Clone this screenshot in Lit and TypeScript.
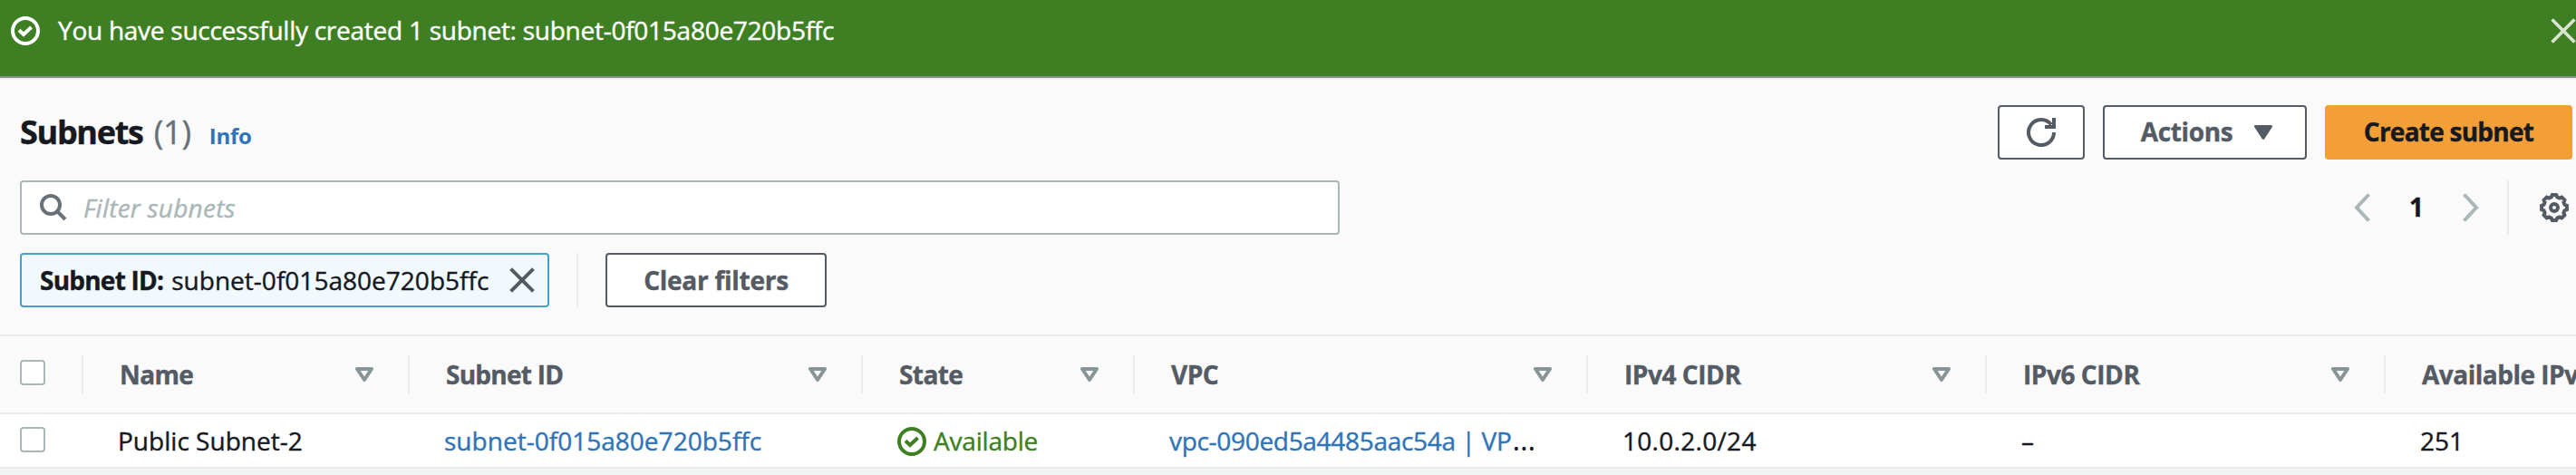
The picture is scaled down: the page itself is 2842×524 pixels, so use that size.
import { LitElement, html, css, svg } from 'lit';
import { customElement } from 'lit/decorators.js';

interface Column { label: string; cls: string; sortable: boolean; }

const columns: Column[] = [
  { label: 'Name', cls: 'c-name', sortable: true },
  { label: 'Subnet ID', cls: 'c-id', sortable: true },
  { label: 'State', cls: 'c-state', sortable: true },
  { label: 'VPC', cls: 'c-vpc', sortable: true },
  { label: 'IPv4 CIDR', cls: 'c-v4', sortable: true },
  { label: 'IPv6 CIDR', cls: 'c-v6', sortable: true },
  { label: 'Available IPv4 addresses', cls: 'c-avail', sortable: false },
];

// Closed outline of an eight-toothed cog around (16, 16).
const gearPath = (() => {
  const pt = (deg: number, r: number) => {
    const a = (deg * Math.PI) / 180;
    return `${(16 + r * Math.cos(a)).toFixed(2)} ${(16 + r * Math.sin(a)).toFixed(2)}`;
  };
  const pts: string[] = [];
  for (let k = 0; k < 8; k++) {
    const a = k * 45;
    pts.push(pt(a - 9, 14.1), pt(a + 9, 14.1), pt(a + 16, 11.9), pt(a + 29, 11.9));
  }
  return `M${pts.join('L')}Z`;
})();

const statusIcon = html`<svg class="icon" width="32" height="32" viewBox="0 0 32 32">
  <circle cx="16" cy="16" r="14" /><path d="M9 15.2L14 20L22.6 12" /></svg>`;
const closeIcon = html`<svg class="icon" width="28" height="28" viewBox="0 0 28 28">
  <path d="M1.6 1.6L26.4 26.4M26.4 1.6L1.6 26.4" /></svg>`;
const sortIcon = html`<svg class="icon sort" width="20" height="16" viewBox="0 0 20 16">
  <path d="M2 2H18L10 14Z" /></svg>`;
const chevron = (d: string) => html`<svg class="icon chev" width="18" height="32" viewBox="0 0 18 32">${svg`<path d=${d} />`}</svg>`;

@customElement('app-root')
export class AppRoot extends LitElement {
  static styles = css`
    :host {
      display: block;
      height: 524px;
      overflow: hidden;
      background: #fafafa;
      color: #16191f;
      font: 400 28px/38px "Open Sans", "Noto Sans", sans-serif;
      letter-spacing: 0.02px;
      -webkit-text-stroke: 0.4px currentColor;
      white-space: nowrap;
    }
    * { box-sizing: border-box; }
    .icon { display: block; flex: none; fill: none; stroke: currentColor; stroke-width: 4; }
    .flash {
      display: flex;
      align-items: flex-start;
      height: 88px;
      padding: 14px 0 0 12px;
      background: #3e7f23;
      color: #fff;
      border-bottom: 2px solid #eeeff0;
      box-shadow: inset 0 -2px 0 #879089;
    }
    .flash > .icon { margin-top: 4px; }
    .flash-text { flex: 1; margin-left: 20px; letter-spacing: -0.26px; }
    .dismiss { color: #d8e5d3; margin: 6px 0 0; }
    .dismiss .icon { stroke-width: 3.6; }

    .header { display: flex; height: 88px; padding: 28px 4px 0 22px; }
    .title { display: flex; align-items: baseline; flex: 1; margin: 5px 0 0; font-size: 36px; line-height: 49px; height: 49px; }
    .title b { letter-spacing: -1.3px; }
    .count { color: #687078; margin-left: 12px; letter-spacing: -0.2px; }
    .info { color: #2f74b8; font-size: 24px; font-weight: 700; margin-left: 20px; letter-spacing: -0.3px; -webkit-text-stroke: 0; }
    .btn {
      display: flex;
      align-items: center;
      justify-content: center;
      height: 60px;
      border: 2px solid #545b64;
      border-radius: 4px;
      background: #fff;
      color: #545b64;
      font-weight: 700;
    }
    .btn span { margin-top: -2px; }
    .refresh { width: 96px; }
    .actions { width: 225px; margin-left: 20px; letter-spacing: -0.36px; }
    .actions .icon { margin: 0 -4px 0 24px; fill: currentColor; stroke-width: 3; stroke-linejoin: round; }
    .primary { width: 273px; margin-left: 20px; background: #f29f37; border-color: #f29f37; color: #16191f; letter-spacing: -0.75px; }

    .tools { display: flex; justify-content: space-between; height: 60px; margin-top: 23px; padding: 0 8px 0 22px; }
    .search { display: flex; align-items: center; width: 1456px; padding: 0 20px; border: 2px solid #aab7b8; border-radius: 4px; background: #fff; color: #687078; }
    .search span { color: #aab7b8; font-style: italic; margin: -1px 0 0 18px; letter-spacing: 0.22px; }
    .pager { display: flex; align-items: center; }
    .chev { color: #aab7b8; }
    .page { width: 102px; text-align: center; font-weight: 700; margin-top: -2px; }
    .rule { width: 2px; height: 60px; background: #eaeaea; }
    .pager .rule { margin: 0 34px 0 31px; }
    .gear { color: #545b64; }

    .filters { display: flex; height: 60px; margin-top: 20px; padding-left: 22px; }
    .chip { display: flex; align-items: center; width: 584px; padding-left: 20px; border: 2px solid #44a1c8; border-radius: 4px; background: #f2f9fd; }
    .chip b { letter-spacing: -0.77px; }
    .chip .val { margin-left: 9px; }
    .chip .icon { margin: 0 14px 0 auto; color: #545b64; }
    .filters .rule { margin: 0 30px; }
    .clear { width: 244px; letter-spacing: -0.26px; }
    .clear span { margin-top: 0; }

    .table { margin-top: 30px; border-top: 2px solid #ebebeb; }
    .grid { display: grid; grid-template-columns: 92px 360px 500px 300px 500px 440px 440px 500px; width: 3132px; }
    .head { height: 86px; border-bottom: 2px solid #ebebeb; color: #545b64; font-weight: 700; padding-top: 21px; }
    .cell { display: flex; align-items: flex-start; height: 42px; padding: 0 38px; }
    .head .cell { padding: 2px 38px 0 40px; border-right: 2px solid #ebebeb; }
    .head .pick, .row .pick { padding: 0 0 0 22px; }
    .box { width: 28px; height: 28px; border: 2px solid #aab7b8; border-radius: 4px; background: #fff; margin-top: 5px; }
    .head .box { margin-top: 5px; }
    .sort { color: #879596; margin: 11px 0 0 auto; stroke-width: 4; stroke-linejoin: round; }
    .c-name { letter-spacing: -0.6px; }
    .c-id { letter-spacing: -0.75px; }
    .c-state { letter-spacing: -0.6px; }
    .c-vpc { letter-spacing: -0.5px; }
    .c-v4, .c-v6 { letter-spacing: -0.44px; }
    .c-avail { letter-spacing: -0.5px; }
    .row { height: 60px; padding-top: 10px; background: #fff; border-bottom: 2px solid #ebebeb; }
    .row .box { margin-top: 4px; }
    .link { color: #2f74b8; }
    .vpc { letter-spacing: -0.31px; }
    .dots { font-size: 33px; line-height: 0; letter-spacing: 0; margin-left: 1px; -webkit-text-stroke: 0; }
    .ok { display: flex; color: #3e7f23; letter-spacing: -0.2px; }
    .ok .icon { margin: 4px 8px 0 0; }
    .cidr { letter-spacing: 0.3px; }
    .foot { height: 9px; background: #f2f3f3; }
  `;

  render() {
    return html`
      <div class="flash">
        ${statusIcon}
        <span class="flash-text">You have successfully created 1 subnet: subnet-0f015a80e720b5ffc</span>
        <span class="dismiss">${closeIcon}</span>
      </div>

      <div class="header">
        <div class="title"><b>Subnets</b><span class="count">(1)</span><span class="info">Info</span></div>
        <div class="btn refresh">
          <svg class="icon" width="32" height="32" viewBox="0 0 32 32">
            <path d="M30 16A14 14 0 1 1 27 7.4M30 0V10H20" />
          </svg>
        </div>
        <div class="btn actions"><span>Actions</span>
          <svg class="icon" width="20" height="16" viewBox="0 0 20 16"><path d="M1.5 1.5H18.5L10 14.3Z" /></svg>
        </div>
        <div class="btn primary"><span>Create subnet</span></div>
      </div>

      <div class="tools">
        <div class="search">
          <svg class="icon" width="30" height="30" viewBox="0 0 30 30"><circle cx="12" cy="12" r="10" /><path d="M18.5 18.5L28 28" /></svg>
          <span>Filter subnets</span>
        </div>
        <div class="pager">
          ${chevron('M16.5 1.5L3 16L16.5 30.5')}
          <span class="page">1</span>
          ${chevron('M1.5 1.5L15 16L1.5 30.5')}
          <span class="rule"></span>
          <svg class="icon gear" width="32" height="32" viewBox="0 0 32 32">
            <path d=${gearPath} /><circle cx="16" cy="16" r="4" />
          </svg>
        </div>
      </div>

      <div class="filters">
        <div class="chip"><span><b>Subnet ID:</b><span class="val">subnet-0f015a80e720b5ffc</span></span>${closeIcon}</div>
        <span class="rule"></span>
        <div class="btn clear"><span>Clear filters</span></div>
      </div>

      <div class="table">
        <div class="grid head">
          <div class="cell pick"><span class="box"></span></div>
          ${columns.map((c) => html`<div class="cell ${c.cls}">${c.label}${c.sortable ? sortIcon : ''}</div>`)}
        </div>
        <div class="grid row">
          <div class="cell pick"><span class="box"></span></div>
          <div class="cell">Public Subnet-2</div>
          <div class="cell link">subnet-0f015a80e720b5ffc</div>
          <div class="cell"><span class="ok">${statusIcon}Available</span></div>
          <div class="cell vpc"><div><span class="link">vpc-090ed5a4485aac54a | VP</span><span class="dots">…</span></div></div>
          <div class="cell cidr">10.0.2.0/24</div>
          <div class="cell">–</div>
          <div class="cell">251</div>
        </div>
        <div class="foot"></div>
      </div>
    `;
  }
}
